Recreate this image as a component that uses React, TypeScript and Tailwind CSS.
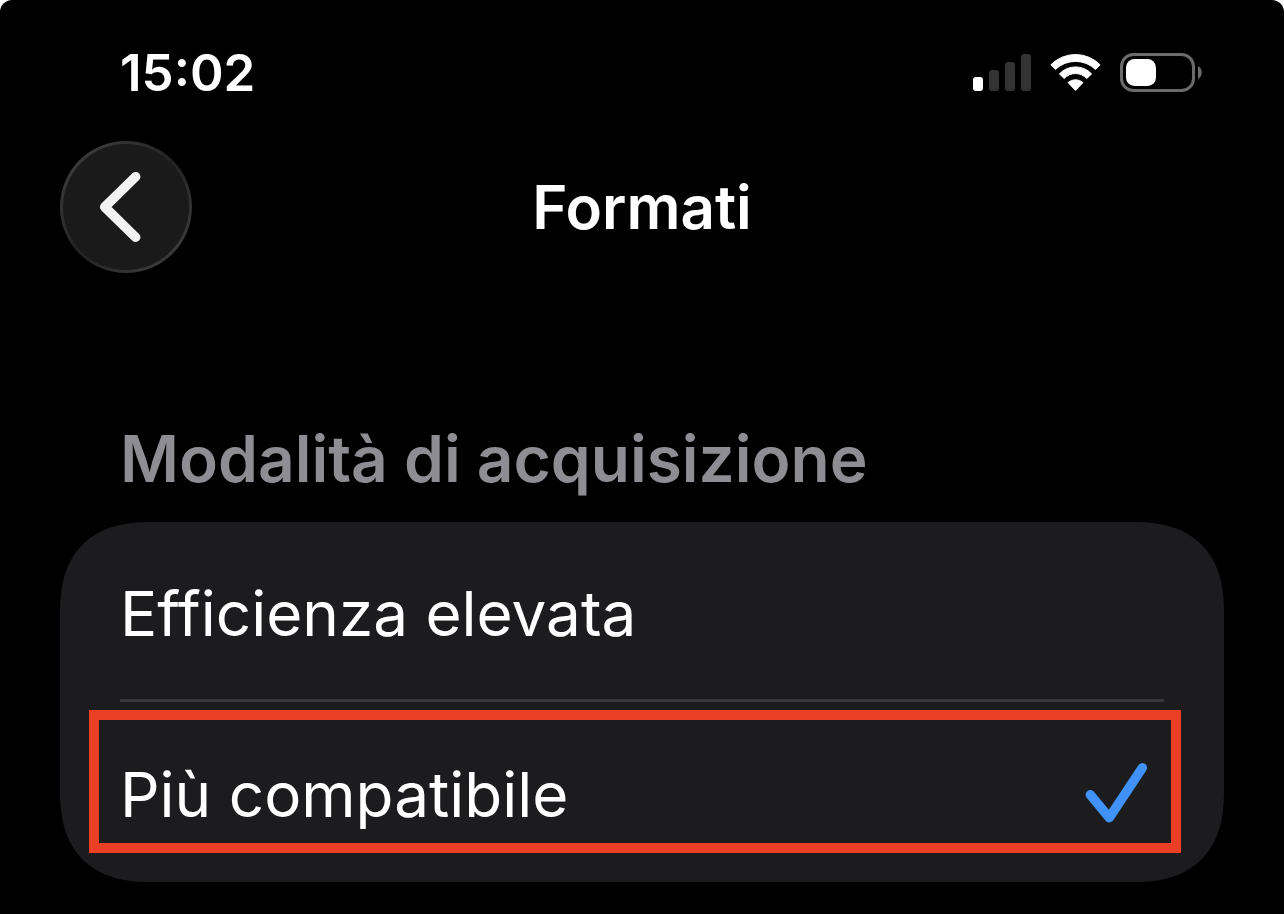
import { useState } from 'react';
import { clsx } from 'clsx';

const FORMATS = [
    { id: 'efficient', label: 'Efficienza elevata' },
    { id: 'compatible', label: 'Più compatibile', highlighted: true },
];

const SignalIcon = () => (
    <svg viewBox="0 0 58 38" className="w-[58px] h-[38px]" aria-hidden="true">
        <rect x="0" y="23" width="10" height="14" rx="3" fill="#fff" />
        <rect x="16" y="16" width="10" height="21" rx="3" fill="#333" />
        <rect x="32" y="8" width="10" height="29" rx="3" fill="#333" />
        <rect x="48" y="0" width="10" height="37" rx="3" fill="#333" />
    </svg>
);

const WifiIcon = () => (
    <svg viewBox="0 0 51 38" className="w-[51px] h-[38px]" fill="#fff" stroke="#fff" strokeWidth="1" strokeLinejoin="round" aria-hidden="true">
        <path d="M.8 10.9A34.5 34.5 0 0 1 50.2 10.9L45.5 15.4A29 29 0 0 0 5.5 15.4Z" />
        <path d="M9.4 19.9A22 22 0 0 1 41.6 19.9L36.8 24.5A15.4 15.4 0 0 0 14.2 24.5Z" />
        <path d="M18 28.5A11.5 11.5 0 0 1 33 28.5L25.5 36.5Z" />
    </svg>
);

const BatteryIcon = () => (
    <svg viewBox="0 0 82 40" className="w-[82px] h-10" aria-hidden="true">
        <rect x="1.5" y="1.5" width="72" height="36" rx="12" fill="none" stroke="#6b6b6b" strokeWidth="3" />
        <rect x="6" y="6" width="30" height="27" rx="8.5" fill="#fff" />
        <path d="M78 13C83 15.5 83 23.5 78 26Z" fill="#6b6b6b" />
    </svg>
);

const StatusBar = () => (
    <div className="flex items-center justify-between h-[60px] pl-[120px] pr-[82px]">
        <time className="text-[51px] leading-[60px] font-semibold">15:02</time>
        <div className="flex items-center gap-[19px]">
            <SignalIcon />
            <WifiIcon />
            <BatteryIcon />
        </div>
    </div>
);

const NavBar = () => (
    <header className="grid grid-cols-[132px_1fr_132px] items-center mt-[38px] px-[60px]">
        <button
            type="button"
            aria-label="Indietro"
            className="size-[132px] rounded-full p-[3px] bg-linear-135 from-[#444444] via-[#222222] to-[#444444] cursor-pointer"
        >
            <span className="block size-full rounded-full bg-[#1a1a1a]">
                <svg viewBox="3 3 126 126" className="size-full" fill="none" stroke="#f2f2f2" strokeWidth="9.5" strokeLinecap="round" strokeLinejoin="round">
                    <path d="M75.7 35.7L44.7 66L75.7 96.3" />
                </svg>
            </span>
        </button>
        <h1 className="text-center text-[60px] leading-[80px] font-semibold">Formati</h1>
    </header>
);

const CheckIcon = () => (
    <svg viewBox="0 0 64 64" className="size-16 mr-4" fill="none" stroke="#4091f8" strokeWidth="9.5" strokeLinecap="round" strokeLinejoin="round" aria-hidden="true">
        <path d="M6.3 34.8L25.3 57.7L58.3 7.8" />
    </svg>
);

export default function App() {
    const [selected, setSelected] = useState('compatible');

    return (
        <div className="bg-white">
            <main className="min-h-screen rounded-t-xl bg-black pt-[43px] pb-8 text-white font-['Inter','Liberation_Sans',sans-serif]">
                <StatusBar />
                <NavBar />
                <section className="px-[60px] pt-[146px]">
                    <h2 id="capture-mode" className="px-[60px] mb-[23px] text-[64px] leading-[80px] font-semibold text-[#8d8d93]">
                        Modalità di acquisizione
                    </h2>
                    <div
                        role="radiogroup"
                        aria-labelledby="capture-mode"
                        className="rounded-[92px] [corner-shape:superellipse(1.3)] bg-[#1c1c1e]"
                    >
                        {FORMATS.map((format, i) => (
                            <label key={format.id} className="relative block h-[180px] px-[60px] cursor-pointer">
                                <input
                                    type="radio"
                                    name="format"
                                    value={format.id}
                                    checked={selected === format.id}
                                    onChange={() => setSelected(format.id)}
                                    className="absolute inset-0 appearance-none cursor-pointer"
                                />
                                <span
                                    className={clsx(
                                        "flex h-full items-center justify-between text-[62px] leading-[80px]",
                                        i < FORMATS.length - 1 && "border-b-3 border-[#38383a]"
                                    )}
                                >
                                    <span className="pt-1.5">{format.label}</span>
                                    {selected === format.id && <CheckIcon />}
                                </span>
                                {format.highlighted && (
                                    <span className="absolute top-2 bottom-[29px] left-[29px] right-[43px] border-10 border-[#eb4026] pointer-events-none" />
                                )}
                            </label>
                        ))}
                    </div>
                </section>
            </main>
        </div>
    );
}
